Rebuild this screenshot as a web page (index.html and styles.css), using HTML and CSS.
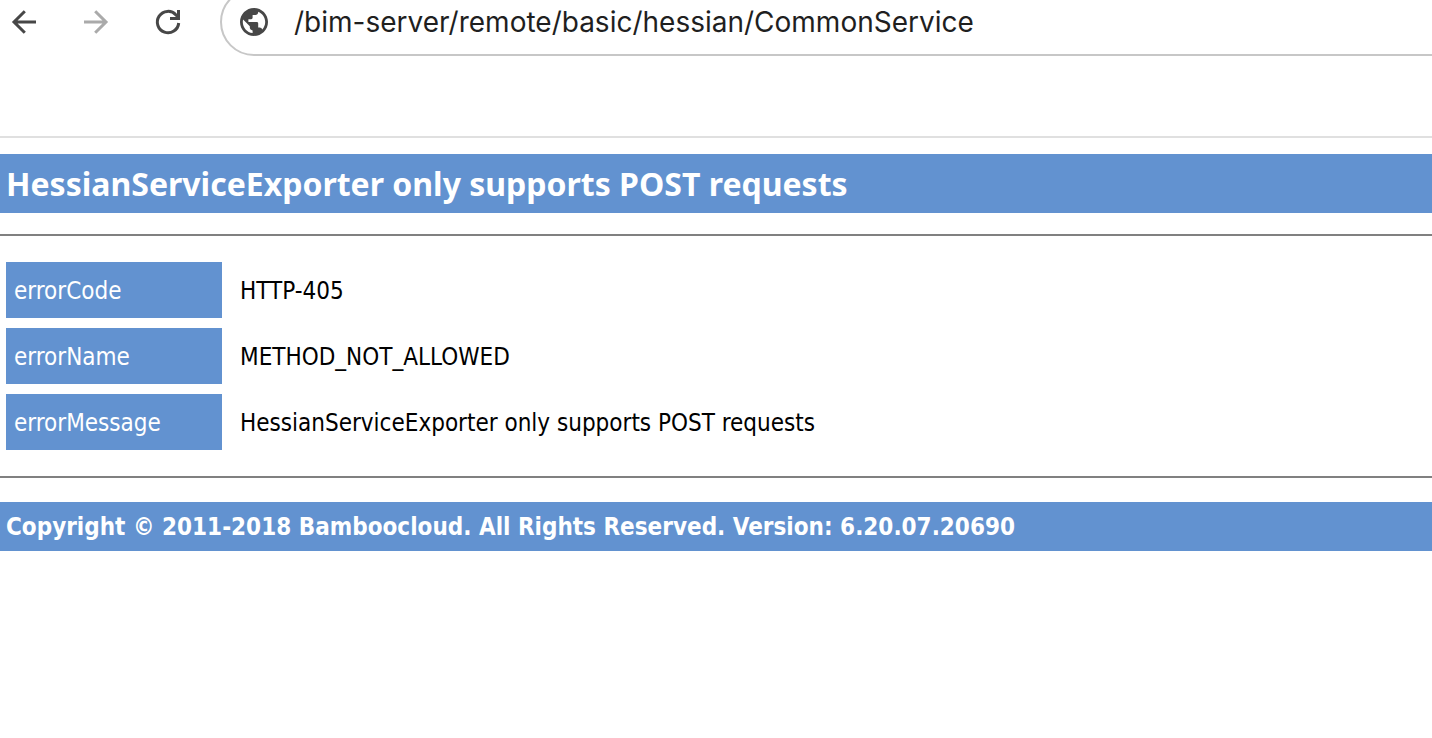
FILE: index.html
```
<!DOCTYPE html>
<html lang="en">
<head>
<meta charset="utf-8">
<title>HTTP-405</title>
<link rel="stylesheet" href="styles.css">
</head>
<body>
<header class="toolbar">
  <button class="nav" aria-label="Back"><svg viewBox="0 0 32 32"><path d="M28 16H6M16.800 5.300L6 16l10.800 10.700"/></svg></button>
  <button class="nav nav-off" aria-label="Forward" disabled><svg viewBox="0 0 32 32"><path d="M4 16h22M15.200 5.300L26 16 15.200 26.700"/></svg></button>
  <button class="nav" aria-label="Reload"><svg viewBox="0 0 32 32"><path d="M26.700 17A10.700 10.700 0 1 1 24 8.900L27 12M26.500 4v8.500H18"/></svg></button>
  <div class="address">
    <svg class="globe" viewBox="2 2 20 20" aria-hidden="true"><path d="M12 2C6.480 2 2 6.480 2 12s4.480 10 10 10 10-4.480 10-10S17.520 2 12 2zm-1 17.930c-3.950-.49-7-3.850-7-7.930 0-.62.080-1.210.21-1.790L9 15v1c0 1.100.9 2 2 2v1.930zm6.900-2.540c-.26-.81-1-1.390-1.900-1.390h-1v-3c0-.55-.45-1-1-1H8v-2h2c.55 0 1-.45 1-1V7h2c1.100 0 2-.9 2-2v-.41c2.930 1.190 5 4.060 5 7.410 0 2.080-.8 3.970-2.100 5.390z"/></svg>
    <input class="url" type="text" aria-label="Address" value="/bim-server/remote/basic/hessian/CommonService">
  </div>
</header>
<main class="page">
  <h1 class="band title">HessianServiceExporter only supports POST requests</h1>
  <hr class="rule">
  <table class="details">
    <tr><th scope="row">errorCode</th><td>HTTP-405</td></tr>
    <tr><th scope="row">errorName</th><td>METHOD_NOT_ALLOWED</td></tr>
    <tr><th scope="row">errorMessage</th><td>HessianServiceExporter only supports POST requests</td></tr>
  </table>
  <hr class="rule">
  <h3 class="band copyright">Copyright © 2011-2018 Bamboocloud. All Rights Reserved. Version: 6.20.07.20690</h3>
</main>
</body>
</html>
```
FILE: styles.css
```
* { box-sizing: border-box; }
body { margin: 0; background: #fff; color: #000; font-family: Tahoma, "DejaVu Sans Condensed", "Noto Sans", sans-serif; }
.toolbar { display: flex; align-items: flex-start; height: 138px; padding-left: 8px; border-bottom: 2px solid #e0e0e0; overflow: hidden; }
.nav { width: 32px; height: 44px; margin-right: 40px; padding: 0; border: 0; background: none; color: #474747; flex: none; }
.nav svg { display: block; width: 32px; height: 32px; fill: none; stroke: currentColor; stroke-width: 3; }
.nav-off { color: #aaa; }
.nav:last-of-type { margin-right: 36px; }
.address { display: flex; align-items: center; flex: 1; gap: 26px; height: 68px; margin-top: -12px; margin-right: -40px; padding-left: 18px; border: 2px solid #c7c7c7; border-radius: 34px; }
.globe { width: 28px; height: 28px; fill: #474747; flex: none; }
.url { flex: 1; min-width: 0; padding: 0; border: 0; outline: 0; background: none; color: #1f1f1f; font: 28px Inter, sans-serif; }
.page { padding-top: 16px; }
.band { margin: 0; padding: 0 6px; background: #6292d0; color: #fff; font-weight: 700; }
.title { margin-bottom: 21px; font-family: Tahoma, "Noto Sans", sans-serif; font-size: 32px; line-height: 59px; }
.rule { height: 2px; margin: 0; border: 0; background: #808080; }
.details { margin: 16px 0; border-spacing: 6px 10px; font-size: 24px; line-height: 54px; }
.details th { width: 216px; padding: 2px 8px 0; background: #6292d0; color: #fff; font-weight: 400; text-align: left; }
.details td { padding: 2px 12px 0; }
.copyright { margin-top: 24px; padding-top: 2px; font-size: 24px; line-height: 47px; }
```
